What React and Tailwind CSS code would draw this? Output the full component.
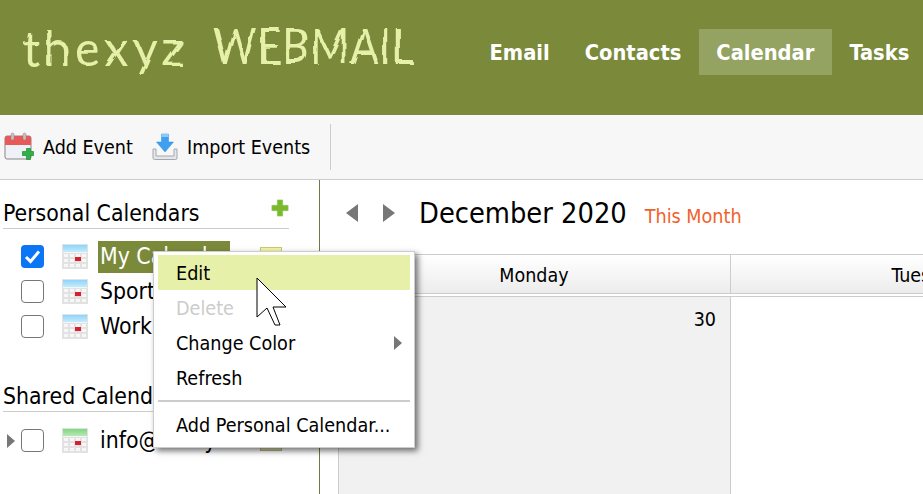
import { useState } from 'react';

const font = { fontFamily: '"DejaVu Sans Condensed", "DejaVu Sans", sans-serif' };

function AddEventIcon() {
  return (
    <svg width="30" height="30" viewBox="0 0 30 30" className="shrink-0">
      <rect x="1" y="4" width="26" height="23" rx="2" fill="#eef1f5" stroke="#8f8585" />
      <path d="M1 6a2 2 0 0 1 2-2h22a2 2 0 0 1 2 2v7H1z" fill="#e8595a" />
      <rect x="7" y="1" width="3" height="7" rx="1.5" fill="#c9c0c0" stroke="#8f8585" strokeWidth="0.5" />
      <rect x="19" y="1" width="3" height="7" rx="1.5" fill="#c9c0c0" stroke="#8f8585" strokeWidth="0.5" />
      <path d="M21 19h4v-3h4v3h3v4h-3v4h-4v-4h-4z" transform="translate(-2.5 0.5)" fill="#2fb14a" stroke="#1c8a35" strokeWidth="0.7" />
    </svg>
  );
}

function ImportIcon() {
  return (
    <svg width="26" height="28" viewBox="0 0 26 28" className="shrink-0">
      <path d="M1 16v9a1.5 1.5 0 0 0 1.5 1.5h21a1.5 1.5 0 0 0 1.5-1.5v-9h-3v7H4v-7z" fill="#e4e7ea" stroke="#a4a8ac" />
      <path d="M9.5 1h7v8h5L13 19 4.500 9h5z" fill="#3f9ff0" stroke="#2f8ce0" strokeWidth="0.5" />
      <rect x="9.500" y="1" width="7" height="3" fill="#8ccaf7" />
    </svg>
  );
}

function CalendarIcon({ from = '#8ed4fb', to = '#c4ebfd' }) {
  const id = `head-${from.slice(1)}`;
  return (
    <svg width="26" height="25" viewBox="0 0 26 25" className="shrink-0">
      <defs>
        <linearGradient id={id} x1="0" y1="0" x2="0" y2="1">
          <stop offset="0" stopColor={from} />
          <stop offset="1" stopColor={to} />
        </linearGradient>
      </defs>
      <rect x="0" y="0" width="26" height="25" fill="#e2e2e2" />
      <rect x="1" y="1" width="24" height="7" fill={`url(#${id})`} />
      <rect x="1" y="8" width="24" height="1" fill="#f5f5f5" />
      <g fill="#f7f7f7">
        <rect x="2" y="10" width="4" height="3" />
        <rect x="8" y="10" width="4" height="3" />
        <rect x="14" y="10" width="4" height="3" />
        <rect x="20" y="10" width="4" height="3" />
        <rect x="2" y="15" width="4" height="3" />
        <rect x="8" y="15" width="4" height="3" />
        <rect x="20" y="15" width="4" height="3" />
        <rect x="2" y="20" width="4" height="3" />
        <rect x="8" y="20" width="4" height="3" />
        <rect x="14" y="20" width="4" height="3" />
        <rect x="20" y="20" width="4" height="3" />
      </g>
      <rect x="13" y="13" width="6" height="4" fill="#d9202f" />
    </svg>
  );
}

function CalendarRow({ label, checked, from, to, selected, swatch, expander }) {
  return (
    <div className="flex items-center h-[35px] relative">
      <div className="w-[21px] flex justify-end pr-[6px]">
        {expander && <div className="w-0 h-0 border-y-[7px] border-y-transparent border-l-[8px] border-l-[#777]" />}
      </div>
      {checked ? (
        <div className="w-[23px] h-[23px] rounded-[4px] bg-[#0a75f5] flex items-center justify-center shrink-0">
          <svg width="17" height="15" viewBox="0 0 17 15">
            <path d="M2 8l4.500 4.500L15 2.500" fill="none" stroke="#fff" strokeWidth="3" />
          </svg>
        </div>
      ) : (
        <div className="w-[23px] h-[23px] rounded-[4px] border border-[#777] bg-white shrink-0" />
      )}
      <div className="ml-[18px]"><CalendarIcon from={from} to={to} /></div>
      <div className={`ml-[10px] h-[32px] w-[132px] px-[2px] text-[22.8px] leading-[30px] whitespace-nowrap ${selected ? 'bg-[#7a8a3a] text-white' : 'text-black'}`}>
        {label}
      </div>
      {swatch && <div className={`ml-[30px] w-[22px] h-[20px] border ${swatch}`} />}
    </div>
  );
}

function SidebarHeading({ children, plus }) {
  return (
    <div className="flex items-end justify-between h-[34px] w-[286px] ml-[3px] border-b border-[#ccc] text-[22.8px] leading-[30px] text-black whitespace-nowrap">
      {children}
      {plus && (
        <svg width="18" height="18" viewBox="0 0 20 20" className="mb-[11px]">
          <path d="M7 1h6v6h6v6h-6v6H7v-6H1V7h6z" fill="#7cb82f" stroke="#8fc757" strokeWidth="0.7" />
        </svg>
      )}
    </div>
  );
}

function Arrow({ dir }) {
  const cls = dir === 'left'
    ? 'border-r-[12px] border-r-[#777]'
    : 'border-l-[12px] border-l-[#777]';
  return <div className={`w-0 h-0 border-y-[9px] border-y-transparent ${cls}`} />;
}

function ContextMenu() {
  const items = [
    { label: 'Edit', hover: true, pad: 'pt-[3px]' },
    { label: 'Delete', disabled: true, pad: 'pt-[3px]' },
    { label: 'Change Color', sub: true, pad: 'pt-[2px]' },
    { label: 'Refresh', pad: 'pt-[2px]' },
  ];
  return (
    <div className="absolute left-[153px] top-[251px] w-[262px] h-[197px] bg-white border border-[#ccc] shadow-[3px_3px_6px_rgba(0,0,0,0.55)] p-[3px_4px] z-10 text-[19.6px] text-black">
      {items.map((item) => (
        <div
          key={item.label}
          className={`h-[35px] pl-[18px] pr-[8px] flex items-center justify-between ${item.hover ? 'bg-[#e6f0a8]' : ''} ${item.disabled ? 'text-[#ccc]' : ''}`}
        >
          <span className={item.pad}>{item.label}</span>
          {item.sub && <div className="w-0 h-0 border-y-[7px] border-y-transparent border-l-[8px] border-l-[#777]" />}
        </div>
      ))}
      <div className="h-[2px] bg-[#ccc] mt-[5px] mb-[5px]" />
      <div className="h-[35px] pl-[18px] pt-[2px] flex items-center whitespace-nowrap">Add Personal Calendar...</div>
    </div>
  );
}

function Cursor() {
  return (
    <svg width="34" height="50" viewBox="0 0 34 50" className="absolute left-[256px] top-[277px] z-20">
      <path d="M1 1v39l10-9 8 17h5l-7-18h13z" fill="#fff" stroke="#000" strokeWidth="1" strokeLinejoin="round" />
    </svg>
  );
}

export default function App() {
  const [active] = useState('Calendar');
  const navItems = ['Email', 'Contacts', 'Calendar', 'Tasks'];

  return (
    <div className="relative h-screen overflow-hidden bg-white flex flex-col" style={font}>
      {/* wobble gives the logo text its hand drawn look */}
      <svg width="0" height="0" className="absolute">
        <filter id="hand">
          <feTurbulence type="fractalNoise" baseFrequency="0.045" numOctaves="2" seed="4" />
          <feDisplacementMap in="SourceGraphic" scale="5" />
        </filter>
      </svg>

      <header className="h-[115px] bg-[#7a8a3a] flex shrink-0">
        <div className="w-[490px] shrink-0 pl-[22px] pt-[21px] text-[#e6f0a8] whitespace-nowrap flex items-baseline [filter:url(#hand)]" style={{ fontFamily: '"Lato", sans-serif' }}>
          <span className="text-[48px] leading-[54px] font-normal tracking-[4.500px] w-[191px]">thexyz</span>
          <span className="inline-block origin-bottom scale-y-[1.2] text-[42px] leading-[54px] font-normal tracking-[0.8px]">WEBMAIL</span>
        </div>
        <nav className="flex items-start pt-[29px] -ml-[18px]">
          {navItems.map((item) => (
            <div
              key={item}
              className={`h-[46px] px-[17.5px] pt-[3px] flex items-center text-white font-bold text-[21.7px] whitespace-nowrap ${item === active ? 'bg-[#94a362]' : ''}`}
            >
              {item}
            </div>
          ))}
        </nav>
      </header>

      <div className="h-[65px] shrink-0 bg-[#f7f7f7] border-b border-[#ccc] flex items-center pl-[4px] text-[19.5px] text-black">
        <div className="flex items-center gap-[9px] w-[148px]">
          <AddEventIcon />
          <span className="whitespace-nowrap pt-[2px]">Add Event</span>
        </div>
        <div className="flex items-center gap-[9px] w-[178px]">
          <ImportIcon />
          <span className="whitespace-nowrap pt-[2px]">Import Events</span>
        </div>
        <div className="w-px h-[46px] bg-[#ccc]" />
      </div>

      <div className="flex flex-1 min-h-0">
        <aside className="w-[320px] shrink-0 border-r border-[#6f7a45] pt-[15px]">
          <SidebarHeading plus>Personal Calendars</SidebarHeading>
          <div className="mt-[10px]">
            <CalendarRow label="My Calendar" checked selected swatch="bg-[#f3f3a0] border-[#c8c878]" />
            <CalendarRow label="Sports" />
            <CalendarRow label="Work" />
          </div>
          <div className="mt-[34px]">
            <SidebarHeading>Shared Calendars</SidebarHeading>
          </div>
          <div className="mt-[11px]">
            <CalendarRow label="info@thexyz.com" expander from="#7fd67f" to="#b8e8b8" swatch="bg-[#d8d8a8] border-[#b8b888]" />
          </div>
        </aside>

        <main className="flex-1 min-w-0 pl-[18px]">
          <div className="h-[74px] flex items-center pb-[6px]">
            <div className="flex items-center gap-[25px] ml-[8px] -mt-[2px]">
              <Arrow dir="left" />
              <Arrow dir="right" />
            </div>
            <span className="ml-[24px] text-[28.7px] text-black whitespace-nowrap">December 2020</span>
            <span className="ml-[18px] mt-[5px] text-[19.6px] text-[#f0622d] whitespace-nowrap">This Month</span>
          </div>
          <div className="flex w-[800px] h-[40px] border-y border-[#ccc] bg-gradient-to-b from-white to-[#ececec] text-[19.5px] text-black">
            <div className="w-[393px] border-r border-[#ccc] flex items-center justify-center pt-[3px]">Monday</div>
            <div className="w-[392px] flex items-center justify-center pt-[3px]">Tuesday</div>
          </div>
          <div className="flex w-[800px] h-[300px] mt-[2px] border-t border-[#ccc] text-[19.5px] text-black">
            <div className="w-[393px] bg-[#f1f1f1] border-x border-[#ccc] text-right pr-[14px] pt-[8px]">30</div>
            <div className="w-[392px] bg-white" />
          </div>
        </main>
      </div>

      <ContextMenu />
      <Cursor />
    </div>
  );
}
